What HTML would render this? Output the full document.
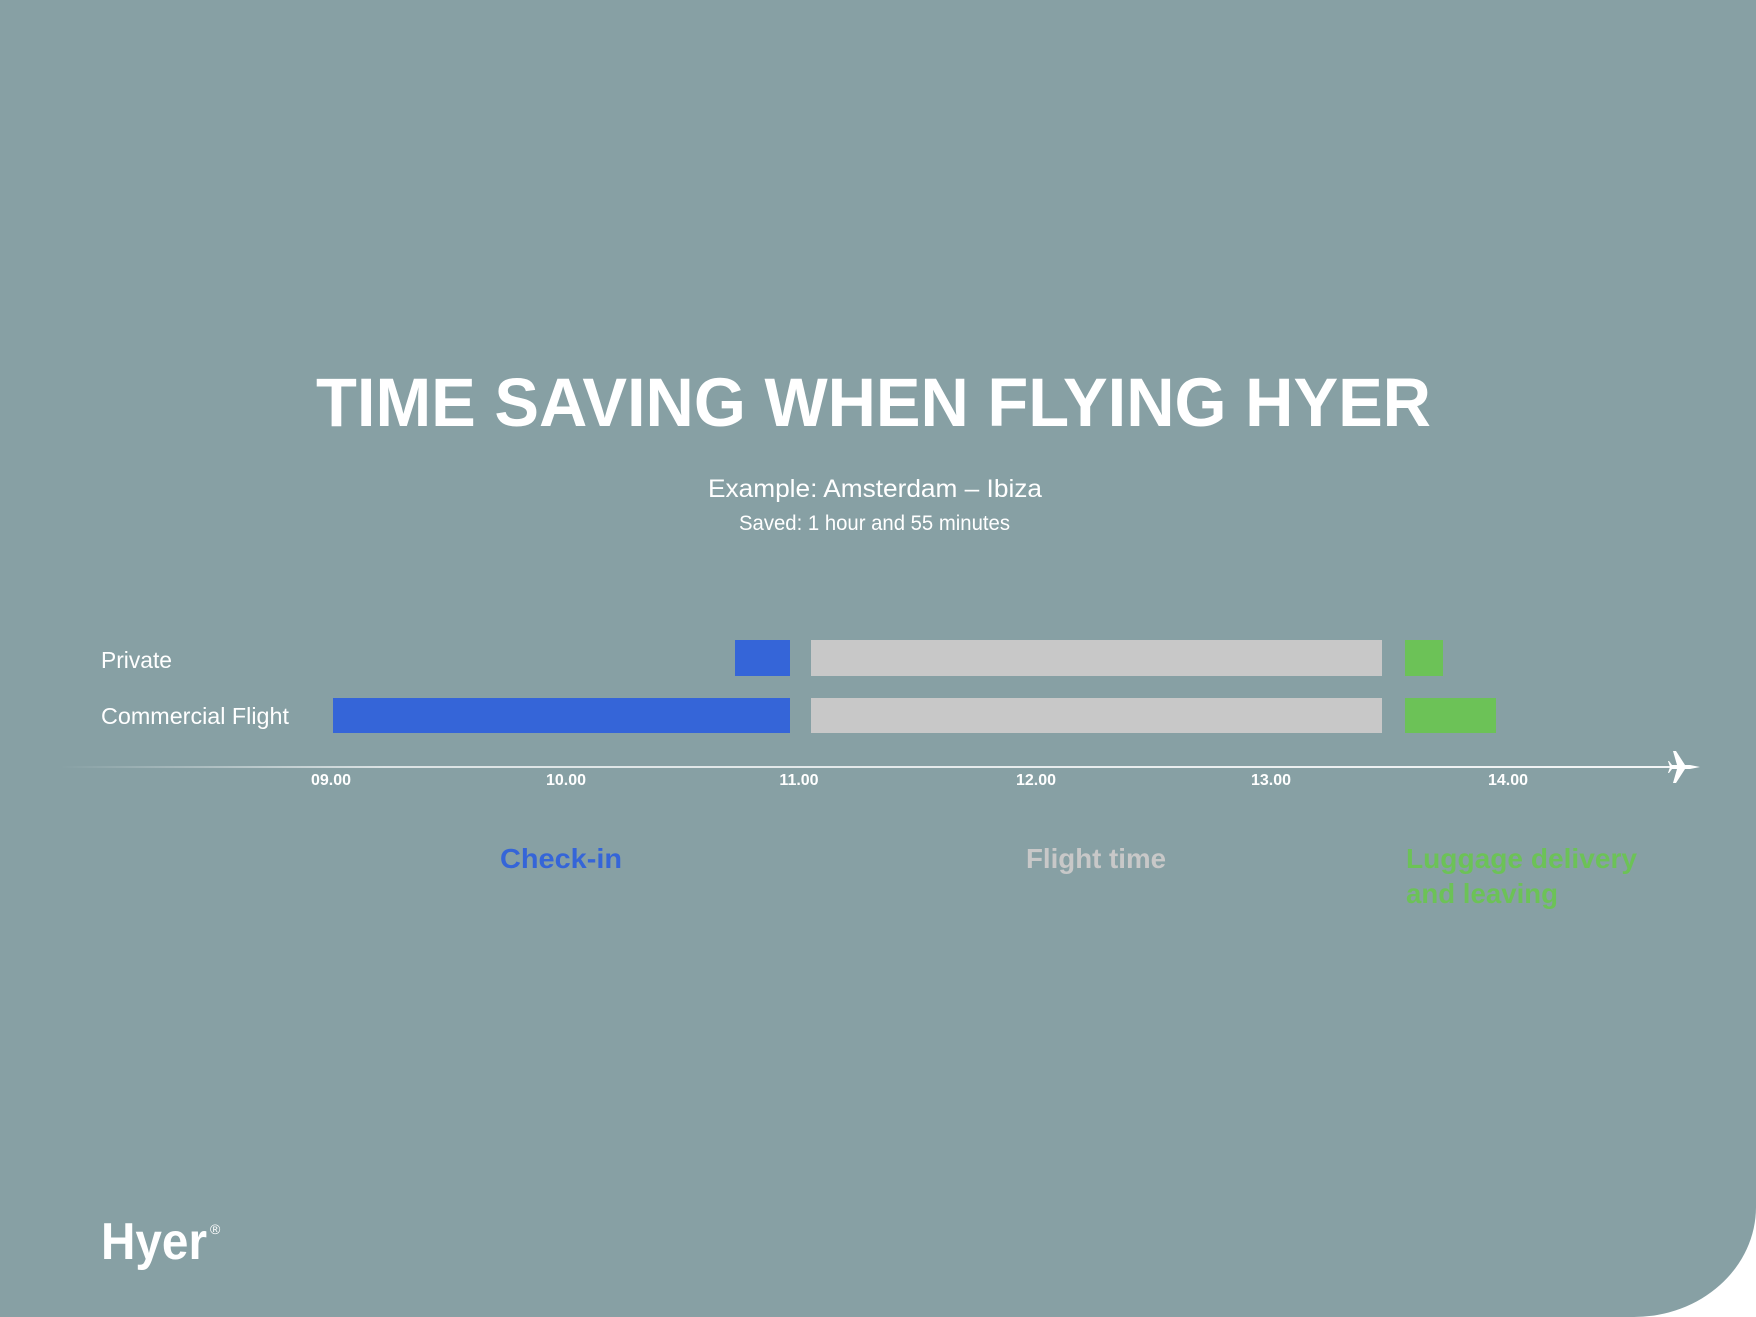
<!DOCTYPE html>
<html><head><meta charset="utf-8"><style>
html,body{margin:0;padding:0;background:#fff;}
.bg{position:absolute;left:0;top:0;width:1756px;height:1317px;background:#87a0a4;border-bottom-right-radius:122px 110px;overflow:hidden;}
svg{position:absolute;left:0;top:0;}
text{font-family:"Liberation Sans",sans-serif;}
</style></head><body>
<div class="bg"></div>
<svg width="1756" height="1317" viewBox="0 0 1756 1317" xmlns="http://www.w3.org/2000/svg">
<defs>
<linearGradient id="ln" x1="60" y1="0" x2="1680" y2="0" gradientUnits="userSpaceOnUse">
<stop offset="0" stop-color="#fff" stop-opacity="0"/>
<stop offset="0.2" stop-color="#fff" stop-opacity="0.7"/>
<stop offset="1" stop-color="#fff" stop-opacity="0.9"/>
</linearGradient>
</defs>
<text x="316" y="426" font-size="69" font-weight="bold" fill="#fff" textLength="1115" lengthAdjust="spacingAndGlyphs">TIME SAVING WHEN FLYING HYER</text>
<text x="708" y="497" font-size="25" fill="#fff" textLength="334" lengthAdjust="spacingAndGlyphs">Example: Amsterdam – Ibiza</text>
<text x="739" y="530" font-size="21" fill="#fff" textLength="271" lengthAdjust="spacingAndGlyphs">Saved: 1 hour and 55 minutes</text>
<text x="101" y="668" font-size="23" fill="#fff" textLength="71" lengthAdjust="spacingAndGlyphs">Private</text>
<text x="101" y="724" font-size="23" fill="#fff" textLength="188" lengthAdjust="spacingAndGlyphs">Commercial Flight</text>
<rect x="735" y="640" width="55" height="36" fill="#3565d8"/>
<rect x="811" y="640" width="571" height="36" fill="#c8c8c8"/>
<rect x="1405" y="640" width="38" height="36" fill="#6cc257"/>
<rect x="333" y="698" width="457" height="35" fill="#3565d8"/>
<rect x="811" y="698" width="571" height="35" fill="#c8c8c8"/>
<rect x="1405" y="698" width="91" height="35" fill="#6cc257"/>
<rect x="60" y="766" width="1620" height="2" fill="url(#ln)"/>
<path d="M1700 767 L1690 765 L1685 765 L1676 751 L1673 751 L1677 765 L1672 765 L1669 761 L1668 761 L1670 767 L1668 773 L1669 773 L1672 769 L1677 769 L1673 783 L1676 783 L1685 769 L1690 769 Z" fill="#fff"/>
<g font-size="16" font-weight="bold" fill="#fff" text-anchor="middle">
<text x="331" y="785">09.00</text>
<text x="566" y="785">10.00</text>
<text x="799" y="785">11.00</text>
<text x="1036" y="785">12.00</text>
<text x="1271" y="785">13.00</text>
<text x="1508" y="785">14.00</text>
</g>
<text x="500" y="868" font-size="28" font-weight="bold" fill="#3565d8" textLength="122" lengthAdjust="spacingAndGlyphs">Check-in</text>
<text x="1026" y="868" font-size="28" font-weight="bold" fill="#c8c8c8" textLength="140" lengthAdjust="spacingAndGlyphs">Flight time</text>
<text x="1406" y="868" font-size="28" font-weight="bold" fill="#6cc257" textLength="231" lengthAdjust="spacingAndGlyphs">Luggage delivery</text>
<text x="1406" y="903" font-size="28" font-weight="bold" fill="#6cc257" textLength="152" lengthAdjust="spacingAndGlyphs">and leaving</text>
<text x="101" y="1259" font-size="52" font-weight="bold" fill="#fff" textLength="106" lengthAdjust="spacingAndGlyphs">Hyer</text>
<text x="210" y="1234" font-size="14" fill="#fff">®</text>
</svg>
</body></html>
